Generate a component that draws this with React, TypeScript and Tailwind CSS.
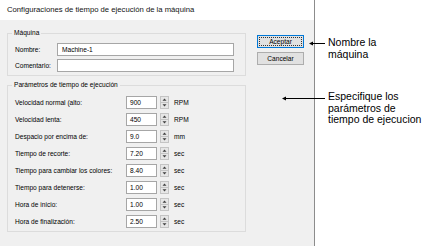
import React from 'react';

const rows = [
  { label: 'Velocidad normal (alto:', value: '900', unit: 'RPM' },
  { label: 'Velocidad lenta:', value: '450', unit: 'RPM' },
  { label: 'Despacio por encima de:', value: '9.0', unit: 'mm' },
  { label: 'Tiempo de recorte:', value: '7.20', unit: 'sec' },
  { label: 'Tiempo para cambiar los colores:', value: '8.40', unit: 'sec' },
  { label: 'Tiempo para detenerse:', value: '1.00', unit: 'sec' },
  { label: 'Hora de inicio:', value: '1.00', unit: 'sec' },
  { label: 'Hora de finalización:', value: '2.50', unit: 'sec' },
];

const Spinner = () => (
  <svg width="9" height="13" viewBox="0 0 9 13" className="ml-[3px] shrink-0">
    <rect x="0.5" y="0.5" width="8" height="12" fill="#e6e6e6" stroke="#c4c4c4" />
    <line x1="1" y1="6.5" x2="8" y2="6.5" stroke="#c4c4c4" />
    <path d="M4.5 2.5 L6.5 4.8 L2.5 4.8 Z" fill="#404040" />
    <path d="M4.5 10.5 L6.5 8.2 L2.5 8.2 Z" fill="#404040" />
  </svg>
);

const Arrow = ({ x1, x2, y }: { x1: number; x2: number; y: number }) => (
  <svg className="absolute left-0 top-0" width="435" height="250" viewBox="0 0 435 250">
    <line x1={x1 + 3} y1={y + 0.5} x2={x2} y2={y + 0.5} stroke="#000" strokeWidth="1" />
    <path d={`M${x1} ${y + 0.5} L${x1 + 4} ${y - 1.5} L${x1 + 4} ${y + 2.5} Z`} fill="#000" />
  </svg>
);

const App: React.FC = () => {
  return (
    <div className="relative flex h-[250px] w-[435px] items-start bg-white font-['Liberation_Sans',Arial,sans-serif] text-black">
      {/* dialog */}
      <div className="flex h-[246px] w-[315px] shrink-0 flex-col border-r border-[#8c8c8c]">
        <div className="flex h-[20px] items-center bg-white pl-[7px] text-[7.7px] text-[#111]">
          Configuraciones de tiempo de ejecución de la máquina
        </div>
        <div className="flex flex-1 bg-[#f0f0f0] pl-[7px] pt-[8px] text-[6.6px]">
          <div className="flex w-[239px] flex-col gap-[4px]">
            <fieldset className="border border-[#dcdcdc]">
              <legend className="ml-[4px] px-[2px] leading-[10px]">Máquina</legend>
              <div className="flex flex-col gap-[3px] pb-[3px] pl-[7px] pt-[5px]">
                <div className="flex items-center">
                  <span className="w-[42px]">Nombre:</span>
                  <div className="flex h-[13px] w-[177px] items-center border border-[#a6a6a6] bg-white pl-[4px]">Machine-1</div>
                </div>
                <div className="flex items-center">
                  <span className="w-[42px]">Comentario:</span>
                  <div className="h-[13px] w-[177px] border border-[#a6a6a6] bg-white" />
                </div>
              </div>
            </fieldset>
            <fieldset className="border border-[#dcdcdc]">
              <legend className="ml-[4px] px-[2px] leading-[10px]">Parámetros de tiempo de ejecución</legend>
              <div className="flex flex-col gap-[4px] pb-[3px] pl-[7px] pt-[6px]">
                {rows.map((r, i) => (
                  <div key={i} className="flex items-center">
                    <span className="w-[111px]">{r.label}</span>
                    <div className="flex h-[13px] w-[31px] items-center border border-[#a6a6a6] bg-white pl-[3px]">{r.value}</div>
                    <Spinner />
                    <span className="ml-[5px]">{r.unit}</span>
                  </div>
                ))}
              </div>
            </fieldset>
          </div>
          <div className="ml-[11px] mt-[7px] flex flex-col gap-[4px]">
            <button className="flex h-[13px] w-[47px] items-center justify-center border border-[#0078d7] bg-[#e1e1e1] outline-dotted outline-1 outline-offset-[-3px] outline-[#333]">
              Aceptar
            </button>
            <button className="flex h-[13px] w-[47px] items-center justify-center border border-[#adadad] bg-[#e1e1e1]">
              Cancelar
            </button>
          </div>
        </div>
      </div>

      {/* annotations */}
      <div className="flex flex-col pl-[13px] pt-[37px] text-[10.5px] leading-[11.5px]">
        <div>
          Nombre la
          <br />
          máquina
        </div>
        <div className="mt-[31px]">
          Especifique los
          <br />
          parámetros de
          <br />
          tiempo de ejecucion
        </div>
      </div>
      <Arrow x1={309} x2={325} y={43} />
      <Arrow x1={282} x2={325} y={98} />
    </div>
  );
};

export default App;
